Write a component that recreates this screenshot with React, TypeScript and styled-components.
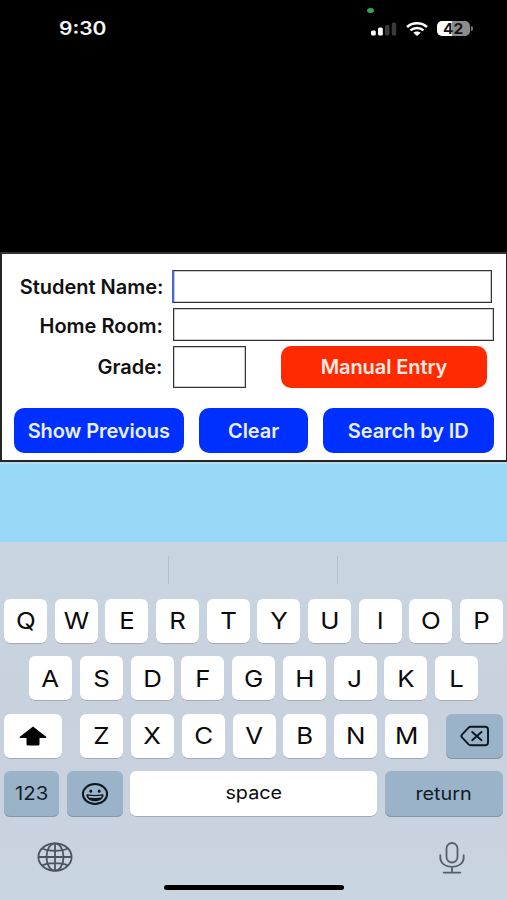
import React from "react"
import styled, { createGlobalStyle } from "styled-components"

const GlobalStyle = createGlobalStyle`
	* {
		box-sizing: border-box;
	}

	body {
		margin: 0;
		background: #000;
		font-family: "Inter", "Liberation Sans", sans-serif;
	}

	button,
	input {
		font: inherit;
		margin: 0;
		padding: 0;
	}
`

const Screen = styled.main`
	display: flex;
	flex-direction: column;
	width: 507px;
	height: 900px;
	overflow: hidden;
	background: #000;
`

const CameraArea = styled.header`
	position: relative;
	flex: none;
	height: 252px;
`

const StatusBar = styled.div`
	display: flex;
	align-items: center;
	justify-content: space-between;
	height: 57px;
	padding: 0 34px 0 59px;
`

// Horizontally widened text, the whole display is stretched sideways
const Wide = styled.span<{ $scale?: number; $origin?: string }>`
	display: inline-block;
	transform: scaleX(${(props) => props.$scale ?? 1.1});
	transform-origin: ${(props) => props.$origin ?? "center"};
`

const Clock = styled.time`
	padding-top: 1px;
	color: #f4f4f4;
	font-size: 18px;
	font-weight: 600;
	line-height: 22px;
`

const PrivacyDot = styled.span`
	position: absolute;
	top: 8px;
	left: 367px;
	width: 7px;
	height: 5px;
	border-radius: 50%;
	background: #35a35c;
`

const StatusIcons = styled.div`
	display: flex;
	align-items: center;
	gap: 9px;
`

const Battery = styled.div`
	display: flex;
	align-items: center;
	gap: 1px;

	&::after {
		content: "";
		width: 2px;
		height: 5px;
		border-radius: 0 2px 2px 0;
		background: #777;
	}
`

const BatteryBody = styled.div`
	display: flex;
	align-items: center;
	justify-content: center;
	width: 33px;
	height: 15px;
	border-radius: 5px;
	background: linear-gradient(to right, #fff 44%, #8c8c8c 44%);
	color: #151515;
	font-size: 14px;
	font-weight: 700;
	line-height: 15px;
`

const Panel = styled.section`
	flex: none;
	height: 210px;
	padding: 16px 12px 0 12px;
	border: 2px solid #242424;
	border-top-color: #333;
	border-right-width: 1px;
	background: #fff;
`

const FieldRow = styled.div<{ $height: number; $gap: number }>`
	display: flex;
	align-items: center;
	height: ${(props) => props.$height}px;
	margin-bottom: ${(props) => props.$gap}px;
`

const FieldLabel = styled.label<{ $width?: number; $drop?: number }>`
	flex: none;
	width: ${(props) => props.$width ?? 149}px;
	padding-top: ${(props) => props.$drop ?? 0}px;
	color: #111;
	font-size: 20px;
	font-weight: 600;
	line-height: 24px;
	text-align: right;
	white-space: nowrap;
`

const Field = styled.input<{ $width: number; $start: number; $focused?: boolean }>`
	flex: none;
	width: ${(props) => props.$width}px;
	height: 100%;
	margin-left: ${(props) => props.$start}px;
	border: 1px solid #333;
	border-left: ${(props) => (props.$focused ? "2px solid #4468dc" : "1px solid #333")};
	border-radius: 0;
	background: #fff;
	box-shadow: inset 0 0 0 0.5px #999;
	outline: none;
`

const ActionButton = styled.button<{ $width: number; $red?: boolean }>`
	flex: none;
	width: ${(props) => props.$width}px;
	height: ${(props) => (props.$red ? 42 : 45)}px;
	border: none;
	border-radius: 10px;
	background: ${(props) => (props.$red ? "#ff2a00" : "#0030ff")};
	color: ${(props) => (props.$red ? "#ffe9e0" : "#e8efff")};
	font-size: 20px;
	font-weight: 600;
	line-height: 24px;
	letter-spacing: -0.08px;
	white-space: nowrap;
`

const ManualEntry = styled(ActionButton)`
	margin-left: 35px;
`

const ActionRow = styled.div`
	display: flex;
	justify-content: space-between;
	width: 480px;
	margin: 20px 0 0 -0.5px;
`

const SkyBand = styled.div`
	flex: none;
	height: 80px;
	border-top: 2px solid #b5deee;
	background: #97d8f7;
`

const Keyboard = styled.section`
	flex: 1;
	display: flex;
	flex-direction: column;
	background: linear-gradient(#c8d5e1, #c8d1de 50%, #c9d5e1);
`

const Suggestions = styled.div`
	display: grid;
	grid-template-columns: 169px 169px 1fr;
	height: 28px;
	margin: 14px 0 14.5px;
`

const Suggestion = styled.div`
	&:not(:last-child) {
		border-right: 1px solid #b3bfca;
	}
`

const KeyRow = styled.div<{ $inset?: number }>`
	display: flex;
	justify-content: space-between;
	height: 45px;
	margin-bottom: 12.5px;
	padding: 0 ${(props) => props.$inset ?? 4}px;
`

const LetterGroup = styled.div`
	display: flex;
	gap: 7.8px;
`

const Key = styled.button<{ $width?: number; $dark?: boolean; $small?: boolean }>`
	display: flex;
	flex: none;
	align-items: center;
	justify-content: center;
	width: ${(props) => props.$width ?? 43}px;
	height: ${(props) => (props.$small ? 46 : 45)}px;
	border: none;
	border-radius: 6px;
	background: ${(props) => (props.$dark ? "#9bb3c8" : "#fff")};
	box-shadow: inset 0 -1px 0 ${(props) => (props.$dark ? "#8196a9" : "#a4abb4")};
	color: ${(props) => (props.$dark ? "#101c28" : "#0b0b0b")};
	font-size: ${(props) => (props.$small ? 18 : 23.5)}px;
	line-height: 1;
`

const SpaceKey = styled(Key)`
	padding-bottom: 2px;
`

const KeyboardFooter = styled.div`
	display: flex;
	align-items: flex-start;
	justify-content: space-between;
	height: 56px;
	padding: 13px 42px 0 37px;
`

const HomeIndicator = styled.div`
	width: 180px;
	height: 5px;
	margin-left: 164px;
	border-radius: 3px;
	background: #000;
`

const SignalIcon = () => (
	<svg width="26" height="14" viewBox="0 0 26 14">
		<rect x="0" y="8.5" width="4.8" height="5" rx="1.5" fill="#fff" />
		<rect x="7" y="5.5" width="4.8" height="8" rx="1.5" fill="#fff" />
		<rect x="14" y="3" width="4.4" height="10.5" rx="1.5" fill="#3a3a3a" />
		<rect x="20.8" y="0.5" width="4.4" height="13" rx="1.5" fill="#3a3a3a" />
	</svg>
)

const WifiIcon = () => (
	<svg width="22" height="14" viewBox="0 0 22 14" fill="none" stroke="#fff" strokeWidth="2.5">
		<path d="M1 5C6.6 0 15.4 0 21 5" />
		<path d="M4.5 8.4c3.7-3.3 9.3-3.3 13 0" />
		<path d="M7.3 10.8c2.1-1.9 5.3-1.9 7.4 0L11 14Z" fill="#fff" stroke="none" />
	</svg>
)

const ShiftIcon = () => (
	<svg width="28" height="20" viewBox="0 0 28 20">
		<path
			d="M14 0.5 27.2 10.8q.8 1.2-.6 1.2H20.5v6q0 1.5-1.5 1.5H9q-1.5 0-1.5-1.5v-6H1.4q-1.4 0-.6-1.2Z"
			fill="#000"
		/>
	</svg>
)

const BackspaceIcon = () => (
	<svg width="30" height="22" viewBox="0 0 30 22" fill="none" stroke="#0d1720" strokeWidth="1.9">
		<path
			d="M10.5 1.8H25q3 0 3 2.8v12.8q0 2.8-3 2.8H10.5q-1 0-1.9-.8L2 12.4q-1.3-1.4 0-2.8L8.6 2.6q.9-.8 1.9-.8Z"
			strokeLinejoin="round"
		/>
		<path d="m12.2 7 9.3 8.2m0-8.2-9.3 8.2" strokeLinecap="round" />
	</svg>
)

const EmojiIcon = () => (
	<svg width="28" height="24" viewBox="0 0 28 24">
		<ellipse cx="14" cy="12" rx="12.1" ry="10" fill="none" stroke="#0d1720" strokeWidth="2" />
		<ellipse cx="9.8" cy="9.2" rx="1.4" ry="1.6" fill="#0d1720" />
		<ellipse cx="18.2" cy="9.2" rx="1.4" ry="1.6" fill="#0d1720" />
		<path d="M5.4 13.2q0-1 1-.9c5 .8 10.200.8 15.200 0q1-.1 1 .9c-.6 3.900-4 6-8.600 6s-8-2.100-8.600-6Z" fill="#0d1720" />
		<path d="M7.300 13.800q6.700.8 13.400 0l-.6 1.700q-6.100.8-12.200 0Z" fill="#a9bccd" />
	</svg>
)

const GlobeIcon = () => (
	<svg width="36" height="30" viewBox="0 0 36 30" fill="none" stroke="#4b5561" strokeWidth="1.8">
		<ellipse cx="18" cy="15" rx="16.6" ry="13.7" />
		<ellipse cx="18" cy="15" rx="8.5" ry="13.7" />
		<path d="M18 1.2v27.6M1.3 15h33.4M5.2 6.500c6.500 3.100 19.100 3.100 25.600 0M5.200 23.500c6.500-3.100 19.100-3.100 25.600 0" />
	</svg>
)

const MicIcon = () => (
	<svg width="26" height="32" viewBox="0 0 26 32" fill="none" stroke="#55606c" strokeWidth="1.8" strokeLinecap="round">
		<rect x="7.5" y="1" width="11" height="19.5" rx="5.5" />
		<path d="M1.3 13.2v2.5c0 5.5 5 9.2 11.7 9.2s11.7-3.7 11.7-9.2v-2.5M13 25v5.6M4.7 30.6h16.6" />
	</svg>
)

const renderLetters = (letters: string) =>
	letters.split("").map((letter) => (
		<Key key={letter}>
			<Wide>{letter}</Wide>
		</Key>
	))

export default function App() {
	return (
		<>
			<GlobalStyle />
			<Screen>
				<CameraArea>
					<PrivacyDot />
					<StatusBar>
						<Clock>
							<Wide $scale={1.17} $origin="left">
								9:30
							</Wide>
						</Clock>
						<StatusIcons>
							<SignalIcon />
							<WifiIcon />
							<Battery>
								<BatteryBody>
									<Wide>42</Wide>
								</BatteryBody>
							</Battery>
						</StatusIcons>
					</StatusBar>
				</CameraArea>

				<Panel>
					<FieldRow $height={33} $gap={5}>
						<FieldLabel htmlFor="student" $width={149.5}>
							Student Name:
						</FieldLabel>
						<Field id="student" $width={320} $start={8.5} $focused />
					</FieldRow>
					<FieldRow $height={33} $gap={5}>
						<FieldLabel htmlFor="room" $drop={2}>
							Home Room:
						</FieldLabel>
						<Field id="room" $width={320.5} $start={10} />
					</FieldRow>
					<FieldRow $height={42} $gap={0}>
						<FieldLabel htmlFor="grade" $width={148.5}>
							Grade:
						</FieldLabel>
						<Field id="grade" $width={73} $start={10.5} />
						<ManualEntry $width={206} $red>
							Manual Entry
						</ManualEntry>
					</FieldRow>
					<ActionRow>
						<ActionButton $width={170.5}>Show Previous</ActionButton>
						<ActionButton $width={108.5}>Clear</ActionButton>
						<ActionButton $width={170.5}>Search by ID</ActionButton>
					</ActionRow>
				</Panel>

				<SkyBand />

				<Keyboard>
					<Suggestions>
						<Suggestion />
						<Suggestion />
						<Suggestion />
					</Suggestions>
					<KeyRow>{renderLetters("QWERTYUIOP")}</KeyRow>
					<KeyRow $inset={29}>{renderLetters("ASDFGHJKL")}</KeyRow>
					<KeyRow>
						<Key $width={58} aria-label="shift">
							<ShiftIcon />
						</Key>
						<LetterGroup>{renderLetters("ZXCVBNM")}</LetterGroup>
						<Key $width={57} $dark aria-label="delete">
							<BackspaceIcon />
						</Key>
					</KeyRow>
					<KeyRow>
						<Key $width={55} $dark $small>
							<Wide $scale={1.13}>123</Wide>
						</Key>
						<Key $width={56} $dark $small aria-label="emoji">
							<EmojiIcon />
						</Key>
						<SpaceKey $width={247} $small>
							<Wide>space</Wide>
						</SpaceKey>
						<Key $width={118} $dark $small>
							<Wide>return</Wide>
						</Key>
					</KeyRow>
					<KeyboardFooter>
						<GlobeIcon />
						<MicIcon />
					</KeyboardFooter>
					<HomeIndicator />
				</Keyboard>
			</Screen>
		</>
	)
}
